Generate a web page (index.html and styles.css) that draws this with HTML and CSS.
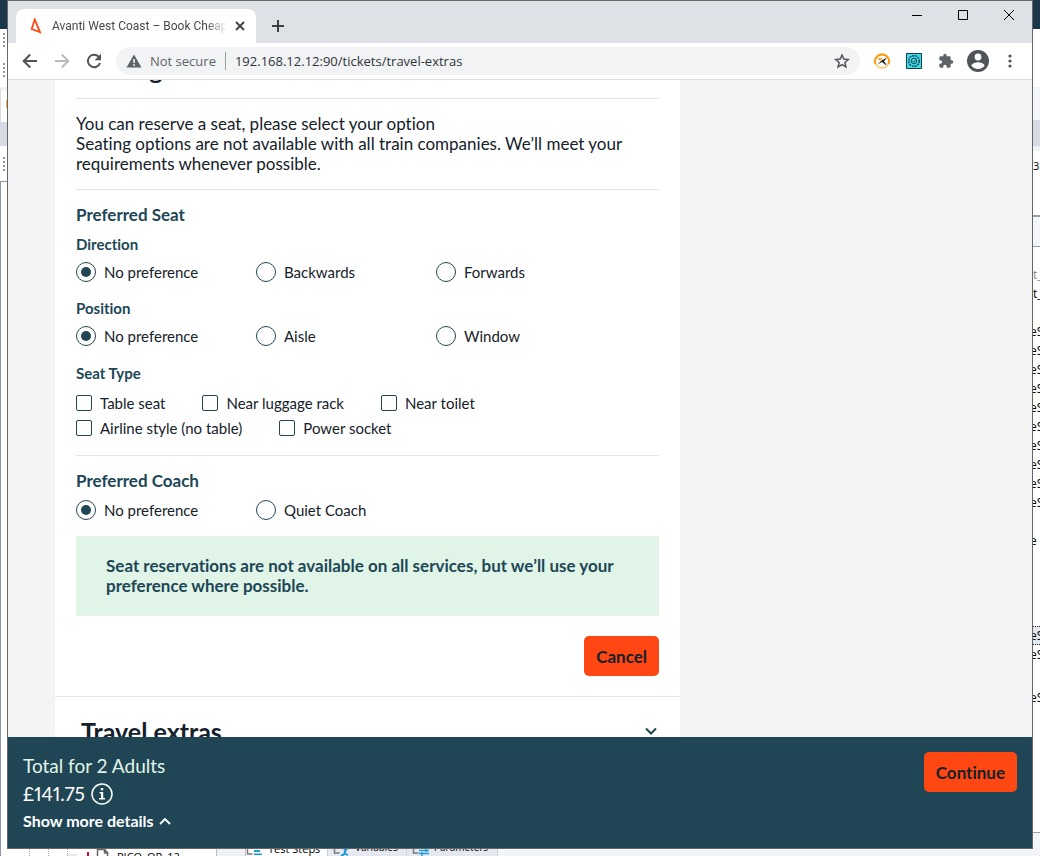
FILE: index.html
```html
<!DOCTYPE html>
<html lang="en">
<head>
<meta charset="utf-8">
<title>Avanti West Coast – Book Cheap Tickets</title>
<link rel="stylesheet" href="styles.css">
</head>
<body>
<div class="desktop">
  <div class="ide">
    <div class="ide-left">
      <div class="ide-title"></div>
      <div class="ide-tools"><i class="grip"></i><i class="grip"></i></div>
      <div class="ide-tabs"><i class="marker"></i></div>
      <div class="ide-band"></div>
      <div class="ide-strip"><i class="grip"></i></div>
      <div class="ide-frame"></div>
    </div>
    <div class="ide-right">
      <div class="ide-title"></div>
      <div class="pane-white"></div>
      <div class="pane-tint"></div>
      <div class="ide-band"></div>
      <div class="pane-number">3</div>
      <div class="pane-split"></div>
      <ul class="code">
        <li class="dim">it_</li><li>it_</li><li></li>
        <li>eS</li><li>eS</li><li>eS</li><li>eS</li><li>eS</li><li>eS</li><li>eS</li><li>eS</li><li>eS</li><li>eS</li>
        <li></li><li>e i</li><li></li><li></li><li></li><li></li>
        <li class="current">eS</li><li>eS</li><li class="last">eS</li>
      </ul>
      <div class="pane-end"></div>
    </div>
    <div class="ide-bottom">
      <div class="tree">
        <svg width="68" height="8" viewBox="0 0 68 8"><path d="M-.500 0v8M18.500 0v8M37.500 0v8M56.500 0v8M56.500 6h9" stroke="#aaa" stroke-dasharray="1 1"/></svg>
        <svg class="tree-file" width="30" height="8" viewBox="0 0 30 8"><path d="M8 3h2v5H8z" fill="#d0102c"/><path d="M18.500 8V.5h7l3 3V8M25.500 1v3h4" fill="#fff" stroke="#666" stroke-width="1.500"/></svg>
        <span>PICO_OR_12</span>
      </div>
      <div class="gutter"></div>
      <div class="tab tab-on"><svg width="18" height="8" viewBox="0 0 18 8"><path d="M1.500 0v6h5" fill="none" stroke="#777" stroke-width="1.500"/><path d="M8 0h4v1H8zM8 2h6v2H8zM8 5.500h8V7H8z" fill="#1d9bd8"/></svg><span>Test Steps</span></div>
      <div class="tab"><svg width="18" height="8" viewBox="0 0 18 8"><path d="M1.500 0v5h5" fill="none" stroke="#777" stroke-width="1.500"/><path d="M9 0q4 0 3 3t3 4M16 0q-3 0-4 4t-4 3" fill="none" stroke="#1d9bd8" stroke-width="2"/></svg><span>Variables</span></div>
      <div class="tab tab-wide"><svg width="18" height="8" viewBox="0 0 18 8"><path d="M1.500 0v5h5" fill="none" stroke="#777" stroke-width="1.500"/><path d="M7 2.500h10M14 0v4M7 5.500h10M10 4v4" stroke="#1d9bd8" stroke-width="1.500"/></svg><span>Parameters</span></div>
    </div>
  </div>

  <div class="browser">
    <header class="tabstrip">
      <div class="browser-tab">
        <svg width="16" height="16" viewBox="0 0 16 16"><path d="M6.800 1.500 3.700 11l8.300 3.200z" fill="none" stroke="#ff4713" stroke-width="1.800"/></svg>
        <span class="tab-title">Avanti West Coast – Book Cheap</span>
        <button class="icon" aria-label="Close tab"><svg width="10" height="10" viewBox="0 0 10 10"><path d="m1 1 8 8M9 1 1 9" stroke="#3c4043" stroke-width="1.800"/></svg></button>
      </div>
      <button class="icon new-tab" aria-label="New tab"><svg width="14" height="14" viewBox="0 0 14 14"><path d="M7 1v12M1 7h12" stroke="#3c4043" stroke-width="2"/></svg></button>
      <div class="window-buttons">
        <button class="icon" aria-label="Minimize"><svg width="12" height="12" viewBox="0 0 12 12"><path d="M1 6.500h10" stroke="#000"/></svg></button>
        <button class="icon" aria-label="Maximize"><svg width="12" height="12" viewBox="0 0 12 12"><path d="M1.500 1.500h9v9h-9z" fill="none" stroke="#000"/></svg></button>
        <button class="icon" aria-label="Close"><svg width="12" height="12" viewBox="0 0 12 12"><path d="m1 1 10 10M11 1 1 11" stroke="#000"/></svg></button>
      </div>
    </header>
    <nav class="toolbar">
      <button class="icon" aria-label="Back"><svg width="16" height="16" viewBox="0 0 16 16"><path d="M15 8H2M8.200 1.500 1.700 8l6.500 6.500" fill="none" stroke="#505357" stroke-width="2"/></svg></button>
      <button class="icon" aria-label="Forward"><svg width="16" height="16" viewBox="0 0 16 16"><path d="M1 8h13M7.800 1.500 14.300 8l-6.500 6.500" fill="none" stroke="#b9bbbe" stroke-width="2"/></svg></button>
      <button class="icon" aria-label="Reload"><svg width="16" height="16" viewBox="0 0 16 16"><path d="M14 10A6.200 6.200 0 1 1 12.600 3.700L14 5.200" fill="none" stroke="#505357" stroke-width="2"/><path d="M15 .8v6.400H8.600z" fill="#505357"/></svg></button>
      <div class="omnibox">
        <svg width="16" height="16" viewBox="0 0 16 16"><path d="M8 1.500.5 14.500h15z" fill="#5f6368"/><path d="M8 6v4M8 11.200v1.800" stroke="#f1f3f4" stroke-width="1.600"/></svg>
        <span class="insecure">Not secure</span>
        <input class="address" type="text" aria-label="Address" value="192.168.12.12:90/tickets/travel-extras">
        <button class="icon" aria-label="Bookmark"><svg width="16" height="16" viewBox="0 0 16 16"><path d="m8 2 1.800 4.100 4.500.4-3.400 3 1 4.400L8 11.600l-3.900 2.300 1-4.400-3.400-3 4.500-.4z" fill="none" stroke="#505357" stroke-width="1.500"/></svg></button>
      </div>
      <div class="extensions">
        <button class="icon" aria-label="Extension"><svg width="16" height="16" viewBox="0 0 16 16"><circle cx="8" cy="8" r="7" fill="#fff" stroke="#ffc56b" stroke-width="1.500"/><path d="M1.500 11A7 7 0 1 1 14.500 11" fill="none" stroke="#fa9d10" stroke-width="2"/><path d="M3.500 5h5L6 8" fill="#f5a322"/><path d="m3.500 11.500 4-4 5.500-3-3 4 2.500 3-1 .5-3.500-3z" fill="#222"/></svg></button>
        <button class="icon" aria-label="Recorder"><svg width="16" height="16" viewBox="0 0 16 16"><path d="M.5.500h15v15H.5z" fill="#43dbe8" stroke="#153f4c"/><circle cx="8" cy="8" r="5.300" fill="none" stroke="#174b58" stroke-width="1.500" stroke-dasharray="2 .8"/><circle cx="8" cy="8" r="2.800" fill="none" stroke="#174b58"/><path d="m6.500 8 1.200 1.200 2.200-2.500" fill="none" stroke="#174b58"/></svg></button>
        <button class="icon" aria-label="Extensions"><svg width="16" height="16" viewBox="0 0 24 24"><path d="M20.500 11H19V7c0-1.100-.9-2-2-2h-4V3.500a2.500 2.500 0 0 0-5 0V5H4c-1.100 0-2 .9-2 2v3.800h1.500a2.700 2.700 0 0 1 0 5.400H2V20c0 1.100.9 2 2 2h3.800v-1.500a2.700 2.700 0 0 1 5.400 0V22H17c1.100 0 2-.9 2-2v-4h1.500a2.500 2.500 0 0 0 0-5z" fill="#5f6368"/></svg></button>
        <button class="icon" aria-label="Profile"><svg width="22" height="22" viewBox="0 0 22 22"><circle cx="11" cy="11" r="11" fill="#505459"/><circle cx="11" cy="7" r="3.400" fill="#fff"/><path d="M4.300 15.500c1-2.300 4.500-3.200 6.700-3.200s5.700.9 6.700 3.200C16.300 17.800 13.700 19 11 19s-5.300-1.200-6.700-3.500z" fill="#fff"/></svg></button>
        <button class="icon" aria-label="Menu"><svg width="4" height="14" viewBox="0 0 4 14"><g fill="#505357"><circle cx="2" cy="2" r="1.600"/><circle cx="2" cy="7" r="1.600"/><circle cx="2" cy="12" r="1.600"/></g></svg></button>
      </div>
    </nav>

    <main class="page">
      <form class="card">
        <h2 class="scrolled">Seating</h2>
        <p class="intro">You can reserve a seat, please select your option<br>Seating options are not available with all train companies. We’ll meet your requirements whenever possible.</p>
        <section class="seat">
          <h3>Preferred Seat</h3>
          <fieldset>
            <legend>Direction</legend>
            <div class="radios">
              <label><input type="radio" name="direction" checked>No preference</label>
              <label><input type="radio" name="direction">Backwards</label>
              <label><input type="radio" name="direction">Forwards</label>
            </div>
          </fieldset>
          <fieldset>
            <legend>Position</legend>
            <div class="radios">
              <label><input type="radio" name="position" checked>No preference</label>
              <label><input type="radio" name="position">Aisle</label>
              <label><input type="radio" name="position">Window</label>
            </div>
          </fieldset>
          <fieldset>
            <legend>Seat Type</legend>
            <div class="checks">
              <label><input type="checkbox">Table seat</label>
              <label><input type="checkbox">Near luggage rack</label>
              <label><input type="checkbox">Near toilet</label>
              <label><input type="checkbox">Airline style (no table)</label>
              <label><input type="checkbox">Power socket</label>
            </div>
          </fieldset>
        </section>
        <section class="coach">
          <h3>Preferred Coach</h3>
          <div class="radios">
            <label><input type="radio" name="coach" checked>No preference</label>
            <label><input type="radio" name="coach">Quiet Coach</label>
          </div>
          <p class="notice">Seat reservations are not available on all services, but we’ll use your preference where possible.</p>
          <div class="actions"><button class="primary" type="button">Cancel</button></div>
        </section>
        <div class="extras">
          <h2>Travel extras</h2>
          <button class="icon" type="button" aria-label="Expand travel extras"><svg width="12" height="8" viewBox="0 0 12 8"><path d="m1 1.500 5 5 5-5" fill="none" stroke="#204656" stroke-width="2"/></svg></button>
        </div>
      </form>
    </main>

    <footer class="basket">
      <div class="summary">
        <span class="party">Total for 2 Adults</span>
        <span class="price">£141.75 <button class="icon" aria-label="Price information"><svg width="22" height="22" viewBox="0 0 22 22"><circle cx="11" cy="11" r="10" fill="none" stroke="#fff" stroke-width="1.500"/><path d="M9.800 5h2.400v2.200H9.800zM8.500 9h3.700v6H14v1.500H8V15h2v-4.500H8.500z" fill="#fff"/></svg></button></span>
        <a class="details" href="#">Show more details <svg width="12" height="8" viewBox="0 0 12 8"><path d="m1 7 5-5 5 5" fill="none" stroke="#fff" stroke-width="1.800"/></svg></a>
      </div>
      <button class="primary">Continue</button>
    </footer>
  </div>
</div>
</body>
</html>
```

FILE: styles.css
```css
* { box-sizing: border-box; }
body { margin: 0; font-family: Lato, "Noto Sans", sans-serif; font-variant-ligatures: none; color: #14212a; }
h2, h3, p, ul, fieldset { margin: 0; padding: 0; }
fieldset { border: 0; min-width: 0; }
ul { list-style: none; }
svg { display: block; flex: none; }
button, input { font-family: inherit; font-size: inherit; font-variant-ligatures: none; }
.icon { display: inline-flex; align-items: center; justify-content: center; padding: 0; border: 0; background: none; }

.desktop { position: relative; height: 100vh; overflow: hidden; background: #fff; }

/* Application window at the back */
.ide { display: grid; grid-template: "left . right" 1fr "bottom bottom bottom" 7px / 7px 1fr 7px; height: 100%; font-family: "Open Sans", sans-serif; }
.ide-left { grid-area: left; display: flex; flex-direction: column; overflow: hidden; }
.ide-right { grid-area: right; display: flex; flex-direction: column; overflow: hidden; }
.ide-title { flex: none; height: 29px; background: #1b384a; }
.ide-tools { display: flex; flex-direction: column; gap: 16px; height: 58px; padding: 4px 0 0 3px; }
.grip { display: block; width: 2px; height: 14px; background: repeating-linear-gradient(#999 0 2px, #fff 2px 4px); }
.ide-tabs { height: 35px; padding: 9px 0 0 5px; border-left: 1px solid #d5dae3; border-top: 4px solid #f1f2f5; }
.marker { display: block; width: 1px; height: 8px; background: #f4b83e; }
.ide-band { flex: none; height: 24px; background: #d5dae3; }
.ide-strip { height: 35px; padding: 11px 0 0 3px; }
.ide-frame { flex: 1; border: solid #8c97b2; border-width: 1px 0 0 1px; }
.pane-white { height: 58px; }
.pane-tint { height: 35px; background: #f4f5f8; border-bottom: 2px solid #d5dae3; }
.pane-number { height: 69px; padding-top: 5px; border-top: 5px solid #f1f2f5; font-size: 11px; line-height: 20px; color: #000; }
.pane-split { height: 32px; border: solid #999ca6; border-width: 2px 0 1px; background: #f4f5f8; }
.code { flex: none; padding-top: 18px; font-size: 12px; line-height: 19px; color: #000; white-space: nowrap; }
.code li { height: 19px; text-indent: -3px; }
.code .dim { color: #888; }
.code .current { background: #e3e7f0; border: dotted #222; border-width: 1px 0; line-height: 17px; }
.code .last { margin-top: 24px; }
.pane-end { flex: 1; margin-top: 125px; border-top: 1px solid #999fb5; background: #f4f5f8; }
.ide-bottom { grid-area: bottom; display: flex; overflow: hidden; background: #f4f5f8; font-size: 11px; line-height: 16px; color: #000; white-space: nowrap; }
.tree { display: flex; width: 216px; padding-left: 10px; background: #fff; border-left: 1px solid #8c97b2; }
.tree-file { margin: 0 8px 0 0; }
.gutter { width: 30px; border: solid #b8bccb; border-width: 0 1px; background: #f0f1f5; }
.tab { display: flex; width: 79px; gap: 4px; align-items: flex-end; padding-left: 5px; background: #e6e8f1; border-right: 1px solid #cdd1dc; font-size: 10px; }
.tab span { height: 17px; }
.tab-on { width: 82px; background: #fff; padding-left: 0; font-size: 11px; }
.tab-on span { height: 15px; }
.tab-wide { width: 91px; }

/* Browser window */
.browser { position: absolute; inset: 0 7px 7px; display: flex; flex-direction: column; border: 1px solid #666; background: #fff; overflow: hidden; }
.tabstrip { display: flex; flex: none; align-items: flex-end; height: 42px; padding-left: 8px; background: #dee1e6; }
.browser-tab { display: flex; align-items: center; width: 240px; height: 34px; padding: 0 11px 0 12px; border-radius: 8px 8px 0 0; background: #fff; }
.tab-title { flex: 1; margin: 0 8px; overflow: hidden; white-space: nowrap; font: 12px/20px Roboto, sans-serif; color: #45494d; mask-image: linear-gradient(90deg, #000 88%, transparent); }
.new-tab { width: 44px; height: 34px; }
.window-buttons { display: flex; align-self: flex-start; margin-left: auto; }
.window-buttons .icon { width: 46px; height: 28px; }
.toolbar { display: flex; flex: none; align-items: center; gap: 16px; height: 37px; padding: 0 14px; border-bottom: 1px solid #dadce0; font-family: "Open Sans", sans-serif; }
.omnibox { display: flex; flex: 1; align-items: center; height: 28px; margin: 0 -2px; padding: 0 10px; border-radius: 14px; background: #f1f3f4; font-size: 13px; line-height: 18px; }
.insecure { margin-left: 8px; padding-right: 9px; border-right: 1px solid #9aa0a6; color: #5f6368; }
.address { flex: 1; min-width: 0; padding: 0 0 0 9px; border: 0; background: none; color: #303438; }
.extensions { display: flex; align-items: center; gap: 16px; }
.extensions .icon { width: 16px; }

/* Ticket options page */
.page { display: flow-root; flex: 1; min-height: 0; overflow: hidden; padding-left: 47px; background: #f4f4f4; }
.card { width: 100%; max-width: 625px; padding: 0 21px; background: #fff; }
h2 { font-size: 25px; line-height: 32px; font-weight: 700; }
h3 { font-size: 17px; line-height: 20px; font-weight: 700; color: #204656; }
.scrolled { margin-top: -27px; padding: 0 4px 13px; border-bottom: 1px solid #e2e4e5; }
.intro { padding: 15px 0; border-bottom: 1px solid #e2e4e5; font-size: 17px; line-height: 20px; }
.seat { padding: 15px 0 17px; border-bottom: 1px solid #e2e4e5; }
fieldset { padding-top: 9px; }
fieldset + fieldset { padding-top: 16px; }
fieldset:last-child { padding-top: 17px; }
legend { float: left; width: 100%; padding: 0; margin-bottom: 8px; font-size: 15px; line-height: 20px; font-weight: 700; color: #204656; }
.radios { display: grid; grid-template-columns: repeat(3, 180px); clear: both; font-size: 15px; line-height: 20px; }
.radios label { display: flex; align-items: center; gap: 8px; }
.radios input { display: grid; place-items: center; width: 20px; height: 20px; margin: 0; border: 1px solid #204656; border-radius: 50%; appearance: none; }
.radios input:checked::before { content: ""; width: 10px; height: 10px; border-radius: 50%; background: #204656; }
.checks { display: flex; flex-wrap: wrap; gap: 5px 37px; padding-top: 2px; clear: both; font-size: 15px; line-height: 20px; }
.checks label { display: flex; align-items: center; gap: 8px; }
.checks input { width: 16px; height: 16px; margin: 0; border: 1px solid #204656; border-radius: 2px; appearance: none; }
.coach { padding: 15px 0 20px; }
.coach .radios { padding-top: 9px; }
.notice { margin: 16px 0 20px; padding: 20px 30px; background: #e0f5e8; font-size: 17px; line-height: 20px; font-weight: 700; color: #204656; }
.actions { display: flex; justify-content: flex-end; }
.primary { height: 40px; padding: 0 12px; border: 0; border-radius: 5px; background: #ff4713; color: #14212a; font-size: 17px; font-weight: 700; }
.extras { display: flex; justify-content: space-between; align-items: center; margin: 0 -21px; padding: 18px 23px 18px 26px; border-top: 1px solid #e2e4e5; }

/* Fixed order summary */
.basket { display: flex; flex: none; justify-content: space-between; align-items: flex-start; padding: 15px 15px 14px; background: #204656; color: #fff; }
.summary { display: flex; flex-direction: column; align-items: flex-start; }
.party { font-size: 19px; line-height: 27px; color: #e0f5e8; }
.price { display: flex; align-items: center; gap: 6px; font-size: 19px; line-height: 29px; font-variant-numeric: proportional-nums; }
.details { display: flex; align-items: center; gap: 5px; font-size: 16px; line-height: 26px; font-weight: 700; color: #fff; text-decoration: none; }
```
